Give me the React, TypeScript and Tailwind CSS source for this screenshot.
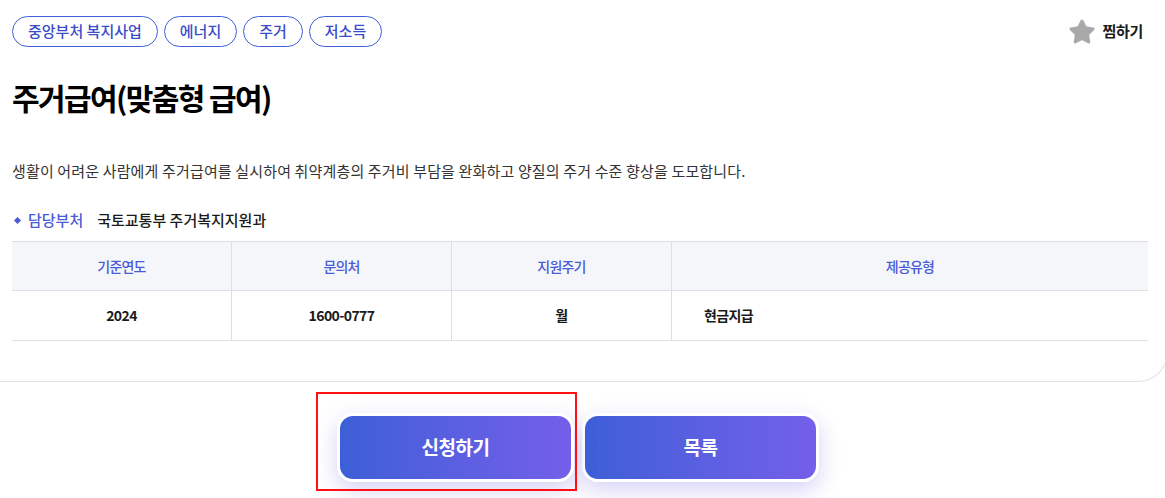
import { Star } from "lucide-react";

const tags = ["중앙부처 복지사업", "에너지", "주거", "저소득"];

const columns = [
	{ head: "기준연도", value: "2024", width: "w-[219px]", align: "justify-center" },
	{ head: "문의처", value: "1600-0777", width: "w-[220px]", align: "justify-center" },
	{ head: "지원주기", value: "월", width: "w-[220px]", align: "justify-center" },
	{ head: "제공유형", value: "현금지급", width: "flex-1", align: "justify-start pl-[32px]" },
];

function Tag({ label }: { label: string }) {
	return (
		<span className="h-[31px] px-[15px] flex items-center rounded-full border border-[#3d5fd9] text-[15px] font-medium text-[#3a4cc9]">
			{label}
		</span>
	);
}

function InfoTable() {
	return (
		<div className="mr-[19px] border-t border-b border-[#dedfe3]">
			<div className="flex h-[49px] bg-[#f5f6fa] border-b border-[#dedfe3]">
				{columns.map((c, i) => (
					<div
						key={c.head}
						className={`${c.width} flex items-center justify-center text-[14px] tracking-[-0.8px] font-medium text-[#4a5bd6] ${i > 0 ? "border-l border-[#dedfe3]" : ""}`}
					>
						{c.head}
					</div>
				))}
			</div>
			<div className="flex h-[49px]">
				{columns.map((c, i) => (
					<div
						key={c.head}
						className={`${c.width} flex items-center ${c.align} text-[14px] tracking-[-0.6px] font-bold text-[#1a1a1a] ${i > 0 ? "border-l border-[#dedfe3]" : ""}`}
					>
						{c.value}
					</div>
				))}
			</div>
		</div>
	);
}

function GradientButton({ label }: { label: string }) {
	return (
		<button className="w-[237px] h-[69px] rounded-[16px] border-[3px] border-white bg-gradient-to-r from-[#3c5fd7] to-[#735fea] text-white text-[19px] font-bold tracking-[-0.5px] shadow-[0_8px_22px_rgba(105,95,220,0.28)]">
			{label}
		</button>
	);
}

export default function App() {
	return (
		<div
			className="w-[1165px] h-[498px] overflow-hidden bg-white text-[#1a1a1a]"
			style={{ fontFamily: '"Noto Sans CJK KR", "Noto Sans", sans-serif' }}
		>
			<div className="w-[1168px] pl-[12px] pt-[16px] pb-[40px] border-b border-r border-[#e2e2e2] rounded-br-[30px]">
				<div className="flex items-center justify-between pr-[24px]">
					<div className="flex gap-[6px]">
						{tags.map((t) => (
							<Tag key={t} label={t} />
						))}
					</div>
					<div className="flex items-center gap-[6px]">
						<Star size={28} strokeWidth={1.5} className="text-[#a9a9a9]" fill="#a9a9a9" />
						<span className="text-[15px] font-bold tracking-[-0.3px]">찜하기</span>
					</div>
				</div>

				<h1 className="mt-[30px] text-[30px] leading-[40px] font-bold tracking-[-1.6px] text-black">
					주거급여(맞춤형 급여)
				</h1>

				<p className="mt-[43px] text-[15px] leading-[22px] tracking-[0.15px] text-[#333]">
					생활이 어려운 사람에게 주거급여를 실시하여 취약계층의 주거비 부담을 완화하고 양질의 주거 수준 향상을 도모합니다.
				</p>

				<div className="mt-[27px] flex items-center h-[22px]">
					<span className="ml-[3px] w-[5px] h-[5px] rotate-45 bg-[#4a5bd6]" />
					<span className="ml-[8px] text-[15px] font-medium text-[#4a5bd6]">담당부처</span>
					<span className="ml-[14px] text-[15px] font-medium text-[#1a1a1a]">국토교통부 주거복지지원과</span>
				</div>

				<div className="mt-[10px]">
					<InfoTable />
				</div>
			</div>

			<div className="flex justify-center gap-[8px] pt-[31px] pr-[9px]">
				<div className="relative">
					<GradientButton label="신청하기" />
					<div className="absolute -left-[21px] -top-[21px] -right-[3px] -bottom-[9px] border-2 border-[#ff1010] pointer-events-none" />
				</div>
				<GradientButton label="목록" />
			</div>
		</div>
	);
}
